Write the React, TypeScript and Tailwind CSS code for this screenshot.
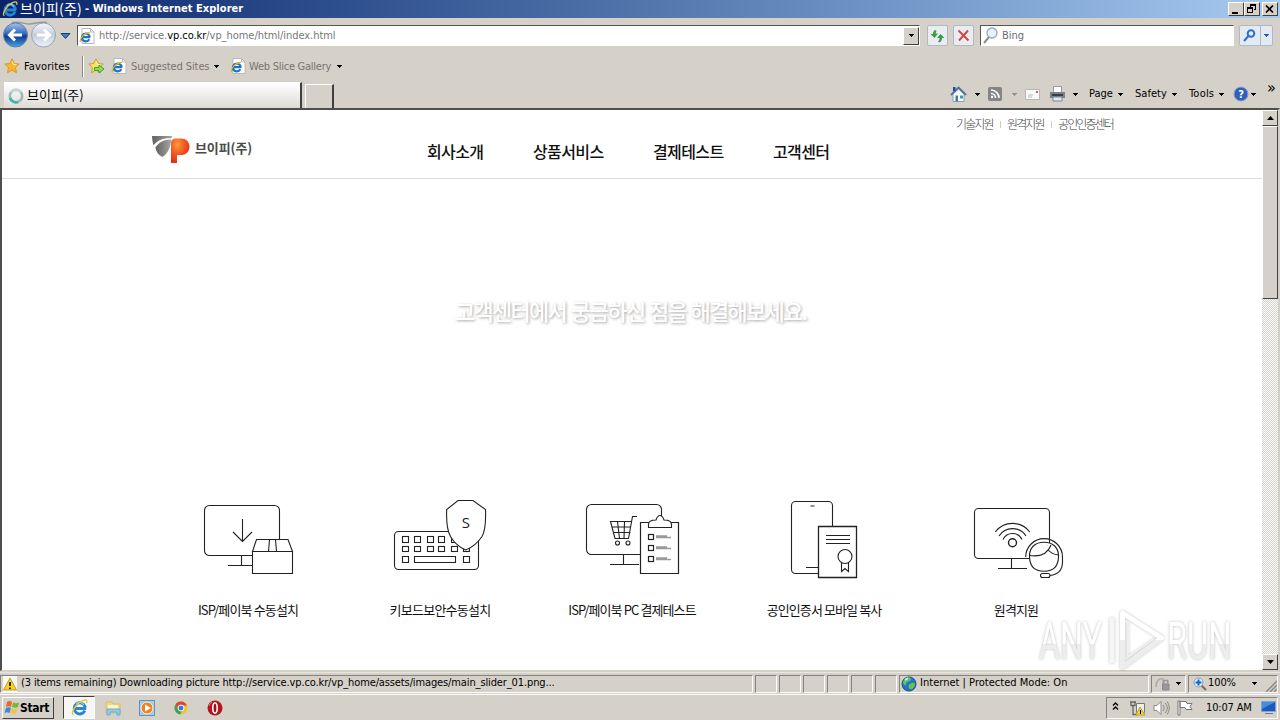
import React from "react";

const ui = "font-['DejaVu_Sans_Condensed','DejaVu_Sans','Noto_Sans_CJK_KR',sans-serif]";
const raised = "bg-[#d5d0c8] border border-t-white border-l-white border-r-[#404040] border-b-[#404040]";

function Caret({ className = "" }: { className?: string }) {
  return (
    <svg className={`shrink-0 ${className}`} width="5" height="3" viewBox="0 0 5 3" shapeRendering="crispEdges">
      <path d="M0 0h5L2.5 3z" fill="currentColor" />
    </svg>
  );
}

function IeMark({ size }: { size: number }) {
  return (
    <svg className="shrink-0" width={size} height={size} viewBox="0 0 16 16" fill="none">
      <path d="M13 11A5.200 5.200 0 1 1 13.200 7.200L13 9H4.500" stroke="#2787d6" strokeWidth="2.800" />
      <path d="M12 5.500A4.400 4.400 0 0 0 5 4.500" stroke="#7fd0f8" strokeWidth="1.200" />
      <path d="M2.300 14.800C-.5 13 4.500 4.500 10.500 1.700 14 .1 15.600 1.200 14.600 3.800" stroke="#ecc43a" strokeWidth="1.300" />
    </svg>
  );
}

function PageIe() {
  return (
    <svg className="shrink-0" width="16" height="16" viewBox="0 0 16 16" fill="none">
      <path d="M3 .5h8.500L15 4v11.500H3z" fill="#fff" stroke="#b9b9b9" />
      <path d="M11.500 .5V4H15" stroke="#b9b9b9" />
      <path d="M10.300 11.200A3.900 3.900 0 1 1 10.500 8.200L10.300 9.200H4" stroke="#1d74c6" strokeWidth="2.200" />
      <path d="M1.500 14C0 11 5.500 4.500 11 4.300" stroke="#e6b522" strokeWidth="1.200" />
    </svg>
  );
}

function Star({ arrow = false }: { arrow?: boolean }) {
  return (
    <svg className="shrink-0" width="17" height="16" viewBox="0 0 17 16">
      <path d="M8 .8l2.200 4.700 5 .6-3.700 3.500 1 5.100L8 12.200l-4.500 2.500 1-5.100L.8 6.100l5-.6z" fill={arrow ? "#f7e35b" : "#f8b62c"} stroke={arrow ? "#c9a42c" : "#e0952a"} />
      <path d="M8 3.200l1.300 3.100 3 .4" stroke="#fff3a8" fill="none" />
      {arrow && <path d="M6.500 9.500H11V7l5 4-5 4v-2.500H6.500z" fill="#8fdc5b" stroke="#3fa02e" />}
    </svg>
  );
}

function TitleBar() {
  return (
    <div className="flex h-[18px] items-center bg-gradient-to-r from-[#0a246a] to-[#a6caf0] pl-[2px] text-white">
      <IeMark size={16} />
      <span className="ml-[2px] h-[18px] w-[62px] whitespace-nowrap font-['Noto_Sans_CJK_KR',sans-serif] text-[14px] leading-[16px] tracking-[0.15px]">브이피(주)</span>
      <span className="ml-[3px] whitespace-nowrap text-[11px] leading-[18px] font-bold tracking-[0.04px]">- Windows Internet Explorer</span>
      <div className="ml-auto mr-[2px] flex h-[14px] text-black">
        <div className={`h-[14px] w-4 ${raised}`}>
          <svg width="14" height="12" viewBox="0 0 14 12"><path d="M3 9h6v2H3z" /></svg>
        </div>
        <div className={`h-[14px] w-4 ${raised}`}>
          <svg width="14" height="12" viewBox="0 0 14 12" fill="none" stroke="#000" shapeRendering="crispEdges"><path d="M5.500 4V1.500h5V6.500H9M5 2.500h6M2.500 4.500h5v5h-5zM2 5.500h6" /></svg>
        </div>
        <div className={`ml-[2px] h-[14px] w-4 ${raised}`}>
          <svg width="14" height="12" viewBox="0 0 14 12" fill="none" stroke="#000" strokeWidth="1.700"><path d="M3 2.500l7 7M10 2.500l-7 7" /></svg>
        </div>
      </div>
    </div>
  );
}

function AddressRow() {
  return (
    <div className="flex h-[32px] items-center">
      <svg className="shrink-0" width="74" height="32" viewBox="0 18 74 32">
        <defs>
          <linearGradient id="back" x1="0" y1="0" x2="0" y2="1"><stop offset="0" stopColor="#a3c5ee" /><stop offset=".45" stopColor="#2f68c2" /><stop offset=".55" stopColor="#0b3a8e" /><stop offset="1" stopColor="#45a5ee" /></linearGradient>
          <linearGradient id="fwd" x1="0" y1="0" x2="0" y2="1"><stop offset="0" stopColor="#f5f8fc" /><stop offset=".5" stopColor="#c4cddb" /><stop offset="1" stopColor="#edf4fb" /></linearGradient>
        </defs>
        <path d="M12 22.500C20 21 24 24 29.500 24S40 21 47 22.500" fill="none" stroke="#9296a8" strokeWidth="1.500" />
        <circle cx="15.500" cy="35" r="12" fill="url(#back)" stroke="#6c7e9e" />
        <circle cx="43.500" cy="35" r="12" fill="url(#fwd)" stroke="#9aa3b3" />
        <path d="M22 35H10M15 29.500L9.500 35l5.500 5.500" fill="none" stroke="#fff" strokeWidth="3" />
        <path d="M37 35h12M44 29.500l5.500 5.500-5.500 5.500" fill="none" stroke="#fff" strokeWidth="3" />
        <path d="M61 33.500h9L65.500 38.500z" fill="#3d7fc4" stroke="#163d74" />
      </svg>
      <div className="ml-[3px] mt-[3px] flex h-[21px] w-[843px] items-center border border-t-[#555] border-l-[#555] border-r-white border-b-white bg-white pl-px">
        <PageIe />
        <span className="ml-[4px] pt-[2px] whitespace-nowrap text-[11px] tracking-[-0.05px] text-[#777]">http://service.<span className="text-black">vp.co.kr</span>/vp_home/html/index.html</span>
        <div className={`ml-auto flex h-[18px] w-[16px] items-center justify-center ${raised}`}><Caret /></div>
      </div>
      <div className="ml-[7px] mt-[3px] flex h-[21px] w-[21px] items-center justify-center rounded-[2px] border border-[#b0b8c4] bg-[#e9edf2]">
        <svg width="15" height="14" viewBox="0 0 15 14" fill="#3f9a46"><path d="M5 1L6.500 2 5.500 4.500h2.500L4.500 9 .5 5H3C3 3 3.500 2 5 1zM10.500 5l4 4H12c0 2-.8 3.500-2.500 4.500L8 12.500c1.200-1 1.500-2 1.500-3.500H7z" /></svg>
      </div>
      <div className="ml-[5px] mt-[3px] flex h-[21px] w-[21px] items-center justify-center rounded-[2px] border border-[#b0b8c4] bg-[#e9edf2]">
        <svg width="13" height="13" viewBox="0 0 13 13" fill="none" stroke="#d0484c" strokeWidth="2"><path d="M1.500 1.500l10 10M11 1.500L2 11.500" /></svg>
      </div>
      <div className="ml-[6px] mt-[3px] flex h-[21px] w-[254px] items-center border border-t-[#555] border-l-[#555] border-r-white border-b-white bg-white pl-[2px] text-[11px] text-[#6d6d6d]">
        <svg width="16" height="17" viewBox="0 0 16 17" fill="none"><path d="M6 10L1 16" stroke="#8b8f96" strokeWidth="2" /><circle cx="9" cy="6" r="5" fill="#e4f2fb" stroke="#9aa7b4" strokeWidth="1.300" /></svg>
        <span className="ml-[3px] pt-[2px]">Bing</span>
      </div>
      <div className="ml-[5px] mt-[3px] flex h-[21px] w-[34px] items-center rounded-[2px] border border-[#b0b8c4] bg-[#e4eaf3]">
        <svg className="ml-[3px]" width="13" height="13" viewBox="0 0 13 13" fill="none" stroke="#2b6fd1" strokeWidth="2"><circle cx="8" cy="4.500" r="3.300" /><path d="M5.500 7L1 12" /></svg>
        <div className="ml-[4px] flex h-full flex-1 items-center justify-center border-l border-[#b0b8c4] text-[#1e5db8]"><Caret /></div>
      </div>
    </div>
  );
}

function FavoritesRow() {
  return (
    <div className="flex h-[32px] items-center pl-[4px] text-[11px] text-[#77746e]">
      <Star />
      <span className="ml-[3px] w-[53px] pt-[2px] whitespace-nowrap tracking-[0.12px] text-black">Favorites</span>
      <div className="ml-[5px] h-[21px] w-[2px] border-l border-[#8c8982] bg-white" />
      <div className="ml-[4px]"><Star arrow /></div>
      <div className="ml-[6px]"><PageIe /></div>
      <span className="ml-[4px] w-[80px] pt-[2px] whitespace-nowrap tracking-[-0.1px]">Suggested Sites</span>
      <Caret className="ml-[3px] text-black" />
      <div className="ml-[11px]"><PageIe /></div>
      <span className="ml-[3px] w-[84px] pt-[2px] whitespace-nowrap tracking-[-0.25px]">Web Slice Gallery</span>
      <Caret className="ml-[4px] text-black" />
    </div>
  );
}

function TabRow() {
  return (
    <div className="flex h-[26px] items-start text-[11px]">
      <div className="ml-[4px] flex h-[26px] w-[298px] items-center border-t border-r-2 border-t-white border-r-[#404040] bg-gradient-to-b from-white to-[#dedbd5] pl-[4px]">
        <svg width="16" height="16" viewBox="0 0 16 16" fill="none"><circle cx="8" cy="8" r="6.200" stroke="#9db9b8" strokeWidth="2.600" /><path d="M3 4.500A6.200 6.200 0 0 1 13 4.500" stroke="#c3d6d5" strokeWidth="2.600" /><path d="M2 10a6.200 6.200 0 0 0 8 4" stroke="#3fb5ab" strokeWidth="2.600" /></svg>
        <span className="ml-[3px] pb-[2px] whitespace-nowrap font-['Noto_Sans_CJK_KR',sans-serif] text-[13px] leading-5">브이피(주)</span>
      </div>
      <div className="ml-[3px] mt-[2px] h-[24px] w-[29px] border-t border-l border-r-2 border-t-white border-l-white border-r-[#404040]" />
      <div className="ml-[616px] flex h-[24px] w-[328px] items-center">
        <svg width="17" height="17" viewBox="0 0 17 17"><path d="M3 8v7.500h11V8L8.500 3z" fill="#f8fbff" stroke="#8ba2bf" /><path d="M1 9L8.500 1.500 16 9" fill="none" stroke="#4a70ac" strokeWidth="1.800" /><path d="M3 1h2.500v4H3z" fill="#234d9c" /><path d="M5.500 9.500h2.500v6H5.500z" fill="#3e7ab3" /><path d="M10 9.500h3v3h-3z" fill="#4a9d9d" /></svg>
        <Caret className="ml-[8px]" />
        <svg className="ml-[8px]" width="14" height="14" viewBox="0 0 14 14"><rect width="14" height="14" rx="2" fill="#858585" /><g fill="none" stroke="#fff" strokeWidth="1.600"><path d="M3 3a8 8 0 0 1 8 8M3 6.500A4.500 4.500 0 0 1 7.500 11" /></g><circle cx="4" cy="10" r="1.200" fill="#fff" /></svg>
        <Caret className="ml-[10px] text-[#99938c]" />
        <svg className="ml-[8px]" width="15" height="11" viewBox="0 0 15 11"><path d="M.5.5h14v10H.5z" fill="#fafafa" stroke="#b9b5b0" /><path d="M11 2h2v2h-2z" fill="#c56" /><path d="M3 6h5M3 8h4" stroke="#bbb" /></svg>
        <svg className="ml-[9px]" width="17" height="16" viewBox="0 0 17 16"><path d="M4.500 .5h8v6h-8z" fill="#fff" stroke="#999" /><path d="M1 6h15v6H1z" fill="#7b7f86" /><path d="M3 8h11v2H3z" fill="#3a3e45" /><path d="M4 11h9v4H4z" fill="#d9ebf5" stroke="#78889a" /></svg>
        <Caret className="ml-[7px]" />
        <span className="ml-[11px] w-[25px] pt-px whitespace-nowrap tracking-[-0.050px]">Page</span><Caret className="ml-[4px]" />
        <span className="ml-[12px] w-[33px] pt-px whitespace-nowrap tracking-[0.050px]">Safety</span><Caret className="ml-[4px]" />
        <span className="ml-[12px] w-[26px] pt-px whitespace-nowrap tracking-[0.200px]">Tools</span><Caret className="ml-[4px]" />
        <svg className="ml-[9px]" width="16" height="16" viewBox="0 0 16 16"><circle cx="8" cy="8" r="7" fill="#2f5fbe" stroke="#8ea2c6" /><text x="8" y="12" textAnchor="middle" fontSize="11" fontWeight="bold" fill="#fff">?</text></svg>
        <Caret className="ml-[2px]" />
        <span className="mb-[13px] ml-[11px] text-[16px] leading-[14px]">»</span>
      </div>
    </div>
  );
}

function Logo() {
  return (
    <svg className="shrink-0" width="38" height="28" viewBox="152 135 38 28">
      <defs>
        <linearGradient id="lg" x1="0" x2="1"><stop offset="0" stopColor="#62635f" /><stop offset="1" stopColor="#a5a6a2" /></linearGradient>
        <radialGradient id="lo" cx=".35" cy=".25" r=".75"><stop offset="0" stopColor="#ff9a3a" /><stop offset=".5" stopColor="#f25a24" /><stop offset="1" stopColor="#dd3020" /></radialGradient>
      </defs>
      <path d="M152 136h20.500l-1.500 2.300c-7.500-.5-13.500 1.700-17.500 7-.9-3-1.400-6-1.500-9.300z" fill="url(#lg)" />
      <path d="M155.500 147.500c3-5 8-8 15.500-8 0 7.500-3 13.500-8.500 17.500-3.500-1.500-6.500-5-7-9.500z" fill="url(#lg)" />
      <path d="M171 143c0-3 2-4.500 5-4.500h5c5 0 8.500 3.500 8.500 8.200 0 4.800-3.500 8.300-8.500 8.300h-4v8h-6z" fill="url(#lo)" />
    </svg>
  );
}

function InstallIcon() {
  return (
    <svg width="120" height="90" viewBox="188 495 120 90" fill="none" stroke="#222" strokeWidth="1.100">
      <rect x="204.500" y="505.500" width="75" height="50" rx="5" />
      <path d="M241.500 555.500v10M228 565.500h25M242.500 519v22M233 532l9.500 9.500L252 532" />
      <path d="M252.500 551.500l4-12h31.500l4.500 12z" fill="#fff" />
      <path d="M252.500 551.500h40v22h-40z" fill="#fff" />
      <path d="M268.500 551.500l1-12M276.500 551.500l-1-12" />
    </svg>
  );
}

const keyRow = [402.5, 414.5, 427.5, 438.5, 451.5];

function KeyboardIcon() {
  return (
    <svg width="120" height="90" viewBox="380 495 120 90" fill="none" stroke="#222" strokeWidth="1.100">
      <rect x="394.500" y="531.500" width="84" height="38" rx="4" />
      {keyRow.map((x) => <rect key={x} x={x} y="536.500" width="6" height="6" />)}
      {[...keyRow, 463.5].map((x) => <rect key={x} x={x} y="546.500" width="6" height="5" />)}
      <path d="M402.500 556.500h6v6h-6zM414.500 556.500h41v6h-41zM463.500 556.500h6v6h-6z" />
      <path d="M458 500.500h15l12.500 9c.5 12 .3 20-3.500 27-4 6-9 10.500-16.200 13.500-7.300-3-11.800-7.500-15.300-13.500-4-7-4.300-15-3.800-27z" fill="#fff" />
      <text x="465.800" y="528" textAnchor="middle" className="font-['Open_Sans']" fontSize="15" fill="#222" stroke="none">S</text>
    </svg>
  );
}

function PaymentIcon() {
  return (
    <svg width="120" height="90" viewBox="572 495 120 90" fill="none" stroke="#222" strokeWidth="1.100">
      <rect x="586.500" y="504.500" width="75" height="50" rx="5" />
      <path d="M623.500 554.500v10M610 564.500h29" />
      <path d="M637 516.500h-4.500L628.500 538.500H615l-4.500-17h21.500M612 527h19M613.500 532.500h17M617.500 521.500l2 17M624.500 521.500l-.5 17" />
      <circle cx="617.500" cy="543" r="2" /><circle cx="628" cy="543" r="2" />
      <path d="M640.500 522.500h38v51h-38z" fill="#fff" strokeWidth="1.200" />
      <path d="M648.500 527.500v-3c0-3 2-4.500 7.500-4.500 1-3 2-4.500 4-4.500s3 1.500 4 4.500c5.500 0 7.500 1.500 7.500 4.500v3z" fill="#fff" />
      {[534.5, 545.5, 556.5].map((y) => (
        <g key={y}><rect x="648.500" y={y} width="5" height="5" strokeWidth="1.200" /><path d={`M656 ${y + 1.5}h11M656 ${y + 3}h15`} stroke="#999" strokeWidth="1.500" /></g>
      ))}
    </svg>
  );
}

function CertificateIcon() {
  return (
    <svg width="120" height="90" viewBox="764 495 120 90" fill="none" stroke="#222" strokeWidth="1.100">
      <rect x="791.500" y="501.500" width="41" height="72" rx="4" />
      <path d="M810.500 506h4M806 567.500h12" />
      <path d="M818.500 526.500h38v51h-38z" fill="#fff" strokeWidth="1.300" />
      <path d="M826 535.500h24M826 539.500h24M826 543.500h24M841.500 562v9.500l3.500-3 3.500 3V562" />
      <circle cx="845" cy="556.500" r="7" fill="#fff" />
    </svg>
  );
}

function SupportIcon() {
  return (
    <svg width="120" height="90" viewBox="956 495 120 90" fill="none" stroke="#222" strokeWidth="1.100">
      <rect x="974.500" y="508.500" width="75" height="50" rx="4" />
      <path d="M1011.500 558.500v10M998 568.500h29" />
      <circle cx="1012.500" cy="542.700" r="4" strokeWidth="1.400" />
      <path d="M1003 539.500a10.500 10.500 0 0 1 19 0M999 536a16 16 0 0 1 27 0M995.300 532a21.500 21.500 0 0 1 34.500 0" />
      <path d="M1029.500 556c0-9 6-13.700 14.500-13.700s14.500 4.700 14.500 13.700c0 10-4 15.300-14.500 15.300s-14.500-5.300-14.500-15.300z" fill="#fff" />
      <path d="M1029.500 555.500c10 1.500 18-1 21.500-10.500M1047.700 549.500c3 3.500 6 5 10.800 5.500" />
      <path d="M1025.700 557a18.400 18.400 0 0 1 36.800 0v5c0 8-5 12.500-12.500 13.500" />
      <rect x="1040.500" y="573.500" width="9.500" height="4" rx="2" fill="#fff" />
    </svg>
  );
}

const services = [
  { label: "ISP/페이북 수동설치", icon: <InstallIcon />, cls: "tracking-[-0.85px]" },
  { label: "키보드보안수동설치", icon: <KeyboardIcon />, cls: "tracking-[-0.75px]" },
  { label: "ISP/페이북 PC 결제테스트", icon: <PaymentIcon />, cls: "tracking-[-0.9px]" },
  { label: "공인인증서 모바일 복사", icon: <CertificateIcon />, cls: "tracking-[-0.9px]" },
  { label: "원격지원", icon: <SupportIcon />, cls: "tracking-[-0.85px]" },
];

function Scrollbar() {
  return (
    <div className="flex w-4 flex-col bg-[#e9e7e3] bg-[repeating-conic-gradient(#d4d0c8_0_25%,#ffffff_0_50%)] bg-[length:2px_2px]">
      <div className={`flex h-4 items-center justify-center ${raised}`}><svg width="7" height="4" viewBox="0 0 7 4"><path d="M0 4h7L3.500 0z" /></svg></div>
      <div className={`h-[173px] ${raised}`} />
      <div className={`mt-auto flex h-4 items-center justify-center ${raised}`}><svg width="7" height="4" viewBox="0 0 7 4"><path d="M0 0h7L3.500 4z" /></svg></div>
    </div>
  );
}

function Site() {
  return (
    <div className="relative flex h-[563px] border-t-2 border-l-2 border-r-2 border-b border-t-[#504e4a] border-l-[#504e4a] border-r-[#d4d0c8] border-b-[#d4d0c8] bg-white font-['Noto_Sans_CJK_KR',sans-serif]">
      <div className="flex min-w-0 flex-1 flex-col">
        <header className="flex h-[69px] shrink-0 border-b border-[#dcdcdc] pl-[150px]">
          <div className="mt-[25px] flex h-[28px] items-center">
            <Logo />
            <span className="ml-[5px] w-[60px] pb-[2px] whitespace-nowrap text-[13px] font-bold tracking-[-0.1px] text-[#4b4b4b]">브이피(주)</span>
          </div>
          <nav className="ml-[172px] mt-[29px] flex h-6 items-center gap-[50px] whitespace-nowrap text-[16px] leading-6 font-medium tracking-[-0.6px] text-[#111]">
            <span className="w-[56px]">회사소개</span><span className="w-[70px]">상품서비스</span><span className="w-[70px]">결제테스트</span><span className="w-[57px]">고객센터</span>
          </nav>
          <div className="ml-[126px] mt-[4px] flex h-5 items-center whitespace-nowrap text-[12px] leading-5 font-light tracking-[-1.900px] text-[#444]">
            <span className="w-[37px]">기술지원</span><i className="mr-[6px] ml-[7px] h-[7px] w-px bg-[#ccc]" /><span className="w-[37px]">원격지원</span><i className="mr-[6px] ml-[7px] h-[7px] w-px bg-[#ccc]" /><span>공인인증센터</span>
          </div>
        </header>
        <h1 className="mt-[116px] h-8 pl-[453px] text-[22px] leading-[30px] font-medium tracking-[-1.730px] [word-spacing:1.200px] whitespace-nowrap text-white [text-shadow:1px_1px_3px_rgba(0,0,0,0.36)]">고객센터에서 궁금하신 점을 해결해보세요.</h1>
        <div className="mt-[168px] ml-[150px] grid w-[960px] grid-cols-5">
          {services.map((s) => (
            <div key={s.label} className="flex flex-col items-center">
              {s.icon}
              <span className={`mt-[15px] text-[13px] leading-5 whitespace-nowrap text-[#111] ${s.cls}`}>{s.label}</span>
            </div>
          ))}
        </div>
      </div>
      <Scrollbar />
      <svg className="absolute top-[495px] left-[1030px] drop-shadow-[0_0_1.5px_rgba(0,0,0,0.25)]" width="210" height="66" viewBox="1032 605 210 66">
        <defs>
          <linearGradient id="wm" x1="0" y1="0" x2="0" y2="1"><stop offset="0.55" stopColor="#fff" /><stop offset="0.55" stopColor="#ededed" /></linearGradient>
          <linearGradient id="wp" x1="0" y1="0" x2="0" y2="1"><stop offset="0.5" stopColor="#fff" /><stop offset="0.5" stopColor="#ededed" /></linearGradient>
        </defs>
        <g fill="url(#wm)" fontFamily="Roboto" fontSize="51" fontWeight="400">
          <text transform="translate(1039 659) scale(.63 1)">ANY</text>
          <text transform="translate(1167 659) scale(.64 1)">RUN</text>
        </g>
        <path d="M1122.500 613v54l39-29z" fill="none" stroke="url(#wp)" strokeWidth="5" strokeLinejoin="round" />
        <path d="M1128 622v35l26-18" fill="none" stroke="#f1f1f1" strokeWidth="1.500" />
        <path d="M1112 618v45" stroke="#f6f6f6" strokeWidth="5" />
      </svg>
    </div>
  );
}

const sunk = "h-[18px] border border-t-[#85827c] border-l-[#85827c] border-r-white border-b-white";

function StatusBar() {
  return (
    <div className="flex h-[22px] items-center gap-[2px] border-t border-[#e8e5e0] text-[11px]">
      <div className={`flex w-[753px] items-center pl-[1px] ${sunk}`}>
        <svg width="16" height="16" viewBox="0 0 16 16"><path d="M1 0h14v16H1z" fill="#f7f7f4" /><path d="M8 2l6.500 12h-13z" fill="#f6d51c" stroke="#c0a01c" /><path d="M8 6v4M8 11.500v1.500" stroke="#000" strokeWidth="1.600" /></svg>
        <span className="ml-[3px] whitespace-nowrap tracking-[-0.12px]">(3 items remaining) Downloading picture http://service.vp.co.kr/vp_home/assets/images/main_slider_01.png...</span>
      </div>
      {[0, 1, 2, 3, 4, 5].map((i) => <div key={i} className={`w-[22px] ${sunk}`} />)}
      <div className={`flex w-[250px] items-center pl-[1px] ${sunk}`}>
        <svg width="16" height="16" viewBox="0 0 16 16"><circle cx="8" cy="8" r="7" fill="#2473c7" stroke="#174c8b" /><path d="M4 3c2-2 6-2 6 0 0 3-5 2-5 5S1.500 8 2 6zM9 8c3-2 5-1 5 0 0 3-3 6-5 5s-2-4 0-5z" fill="#5fc655" /><path d="M4 4l3-2" stroke="#cfeeff" strokeWidth="2" /></svg>
        <span className="ml-[3px] whitespace-nowrap tracking-[0.020px]">Internet | Protected Mode: On</span>
      </div>
      <div className={`flex w-[35px] items-center pl-[3px] ${sunk}`}>
        <svg width="16" height="14" viewBox="0 0 16 14" fill="none"><path d="M1 10C1 4 4 1 8 2v8" stroke="#aaa" strokeWidth="1.500" /><path d="M7.500 7h6.500v6H7.500z" fill="#999" stroke="#888" /><path d="M8.800 7V3.500h4V7" stroke="#999" strokeWidth="1.500" /></svg>
        <Caret className="ml-[5px]" />
      </div>
      <div className={`flex w-[90px] items-center pl-[4px] ${sunk}`}>
        <svg width="14" height="14" viewBox="0 0 14 14" fill="none"><path d="M8 8l5 5" stroke="#8c6a57" strokeWidth="2.200" /><circle cx="5.500" cy="5.500" r="4.500" fill="#dceefc" stroke="#77a4ca" /><path d="M5.500 2.500v6M2.500 5.500h6" stroke="#1f63c1" strokeWidth="2" /></svg>
        <span className="ml-[1px] w-[30px] whitespace-nowrap tracking-[-0.1px]">100%</span>
        <Caret className="ml-[14px]" />
        <svg className="ml-auto mt-[5px]" width="12" height="12" viewBox="0 0 12 12"><path d="M1 12L12 1M5 12l7-7M9 12l3-3" stroke="#888" strokeWidth="1.500" /></svg>
      </div>
    </div>
  );
}

function TaskBar() {
  return (
    <div className="flex h-[26px] items-center border-t border-white pl-[2px] text-[11px]">
      <div className={`flex h-[22px] w-[52px] items-center pl-px ${raised}`}>
        <svg className="shrink-0" width="16" height="15" viewBox="0 0 16 15"><path d="M3 2c2-1.500 4-1 5 0L7 7C5 6 4 6 2 7z" fill="#e66a2c" /><path d="M9 2.500c2 1 4 1 6 0L14 7c-2 1-4 1-6 0z" fill="#74b83b" /><path d="M2 8c2-1 3-1 5 0l-1.500 5c-2-1-3-1-5 0z" fill="#3d87d5" /><path d="M8 8.500c2 1 3 1 5.500 0L12 13c-2 1-3 1-5.500 0z" fill="#f3c334" /></svg>
        <span className="text-[12px] leading-5 font-bold tracking-[-0.35px]">Start</span>
      </div>
      <div className="ml-[9px] flex h-[23px] w-[32px] items-center justify-center border border-t-[#404040] border-l-[#404040] border-r-white border-b-white bg-[#f7f6f4]"><IeMark size={17} /></div>
      <svg className="ml-[10px]" width="16" height="16" viewBox="0 0 16 16"><path d="M1 2h6l1 2h7v9H1z" fill="#edd98d" stroke="#d4bd70" /><path d="M3 5h10v4H3z" fill="#fff3bd" /><path d="M2 9h13v6h-3v-3H5v3H2z" fill="#8fcbe9" stroke="#6badd0" /></svg>
      <svg className="ml-[17px]" width="18" height="18" viewBox="0 0 18 18"><path d="M1.500 1.500h15v15h-15z" fill="#a2cbed" stroke="#5c93c4" /><circle cx="9" cy="9" r="6" fill="#ee8420" stroke="#fff1dc" /><path d="M7 5.500v7L13 9z" fill="#fff" /></svg>
      <svg className="ml-[17px]" width="16" height="16" viewBox="0 0 16 16"><circle cx="8" cy="8" r="6.500" fill="#f1c62c" /><path d="M2.300 4.700A6.500 6.500 0 0 1 14 5.500H8L5 9z" fill="#db4638" /><path d="M2.300 4.700A6.500 6.500 0 0 0 7 14.400L9.500 10 5 9z" fill="#38a456" /><circle cx="8" cy="8" r="3" fill="#3c78dc" stroke="#fff" /></svg>
      <svg className="ml-[17px]" width="18" height="18" viewBox="0 0 18 18"><circle cx="9" cy="9" r="7.500" fill="#b7141b" /><ellipse cx="9" cy="9" rx="2.200" ry="5" fill="#a01016" stroke="#fff" strokeWidth="1.600" /><path d="M3 7a6 6 0 0 1 3-4" stroke="#e57575" fill="none" /></svg>
      <div className="ml-auto mr-[2px] flex h-[22px] w-[172px] items-center border border-t-[#85827c] border-l-[#85827c] border-r-white border-b-white pl-[5px]">
        <svg className="mb-[3px]" width="7" height="10" viewBox="0 0 7 10" fill="none" stroke="#000" strokeWidth="1.300"><path d="M1 4.500L3.500 2 6 4.500M1 8.500L3.500 6 6 8.500" /></svg>
        <svg className="ml-[10px]" width="17" height="16" viewBox="0 0 17 16" fill="none"><path d="M7.500 3.500h8v9h-8z" fill="#eee" stroke="#777" /><path d="M2 1.500v4h4v-4M4 5.500v9h4M1 2h6" stroke="#666" strokeWidth="1.300" /><path d="M11 7l5 8H7z" fill="#f5d42c" stroke="#bba02c" /><path d="M11.500 10v4" stroke="#000" /></svg>
        <svg className="ml-[7px]" width="17" height="16" viewBox="0 0 17 16" fill="#fff" stroke="#888"><path d="M1 5.500h3l4-4v13l-4-4H1z" /><path d="M10 5c1.500 2 1.500 4 0 6M12 3c3 3 3 7 0 10M14 1.500c3 4 3 9 0 13" fill="none" /></svg>
        <svg className="ml-[7px]" width="17" height="16" viewBox="0 0 17 16" fill="#fff" stroke="#777"><path d="M1 1h2v14H1zM3 1.500h6l1 2h5l-2 3 2 3H9l-1-2H3z" /></svg>
        <span className="ml-[12px] w-[47px] pt-px whitespace-nowrap tracking-[-0.15px]">10:07 AM</span>
        <svg className="ml-[8px] shrink-0" width="15" height="14" viewBox="0 0 15 14"><path d="M.5.5h14v10H.5z" fill="#1d5abd" stroke="#7fa4cd" /><path d="M1 1h13L1 8z" fill="#4b8bdc" /><path d="M4 12h8v1H4z" fill="#777" /></svg>
      </div>
    </div>
  );
}

export default function App() {
  return (
    <div className={`flex h-[720px] w-[1280px] flex-col overflow-hidden bg-[#d5d0c8] text-black ${ui}`}>
      <TitleBar />
      <AddressRow />
      <FavoritesRow />
      <TabRow />
      <Site />
      <div className="h-px" />
      <StatusBar />
      <TaskBar />
    </div>
  );
}
